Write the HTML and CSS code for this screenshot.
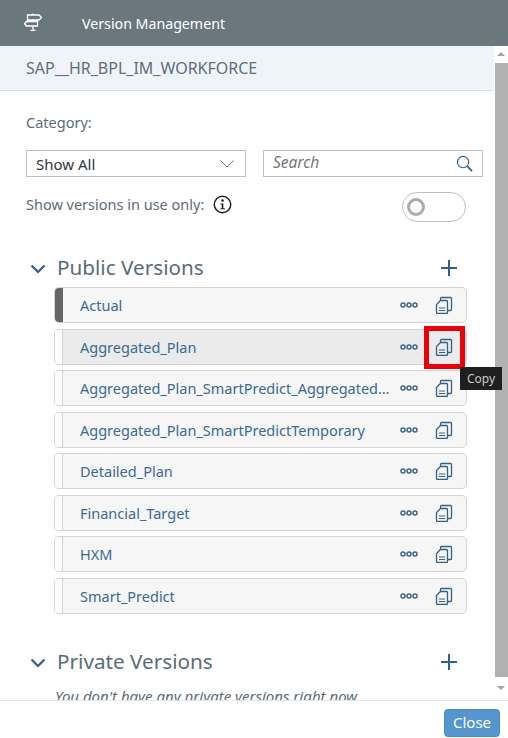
FILE: index.html
```html
<!DOCTYPE html>
<html lang="en">
<head>
<meta charset="UTF-8">
<title>Version Management</title>
<link rel="stylesheet" href="styles.css">
</head>
<body>

<svg width="0" height="0" class="defs">
  <symbol id="i-copy" viewBox="0 0 18 18">
    <path d="M5.500 4.500V2.500A1 1 0 0 1 6.500 1.500H15.500A1 1 0 0 1 16.500 2.500V13.500A1 1 0 0 1 15.500 14.500H12.500" fill="none" stroke="currentColor" stroke-width="1.300"/>
    <path d="M5.500 4.500H11.500A1 1 0 0 1 12.500 5.500V16.500A1 1 0 0 1 11.500 17.500H2.500A1 1 0 0 1 1.500 16.500V8.500Z" fill="none" stroke="currentColor" stroke-width="1.300"/>
    <path d="M4 12H10M4 14.500H10" fill="none" stroke="currentColor" stroke-width="1.200"/>
  </symbol>
  <symbol id="i-more" viewBox="0 0 18 6">
    <circle cx="3" cy="3" r="2" fill="none" stroke="currentColor" stroke-width="1.500"/>
    <circle cx="9" cy="3" r="2" fill="none" stroke="currentColor" stroke-width="1.500"/>
    <circle cx="15" cy="3" r="2" fill="none" stroke="currentColor" stroke-width="1.500"/>
  </symbol>
  <symbol id="i-chev" viewBox="0 0 16 10">
    <path d="M1.500 1.500L8 8L14.500 1.500" fill="none" stroke="currentColor" stroke-width="2.200"/>
  </symbol>
  <symbol id="i-plus" viewBox="0 0 16 16">
    <path d="M8 0V16M0 8H16" fill="none" stroke="currentColor" stroke-width="2"/>
  </symbol>
</svg>

<header class="shell">
  <svg class="shell-icon" width="18" height="18" viewBox="0 0 18 18">
    <path d="M9 0.500V2M3.500 2H15L17.500 4.500L15 7H3.500ZM2.500 8.500H13.500V13H2.500L0.500 10.750ZM9 13V17.500M6.500 17.500H11.500" fill="none" stroke="#fff" stroke-width="1.300"/>
  </svg>
  <span class="shell-title">Version Management</span>
</header>

<div class="middle">
  <div class="pane">
    <div class="model">SAP__HR_BPL_IM_WORKFORCE</div>

    <div class="filters">
      <div class="category">Category:</div>
      <div class="filter-row">
        <div class="field select">
          <span>Show All</span>
          <svg width="14" height="8" viewBox="0 0 14 8"><path d="M0.500 0.500L7 7L13.500 0.500" fill="none" stroke="#5a7a96" stroke-width="1"/></svg>
        </div>
        <div class="field search">
          <span>Search</span>
          <svg width="17" height="17" viewBox="0 0 18 18"><circle cx="7.500" cy="7.500" r="6" fill="none" stroke="#346187" stroke-width="1.200"/><path d="M12 12L17 17" stroke="#346187" stroke-width="1.800"/></svg>
        </div>
      </div>
      <div class="use-row">
        <span>Show versions in use only:</span>
        <svg class="info" width="19" height="19" viewBox="0 0 18 18"><circle cx="9" cy="9" r="7.800" fill="none" stroke="#222" stroke-width="1.400"/><circle cx="9" cy="5.300" r="1.200" fill="#222"/><path d="M7 8H9.800V12.500H11.200V13.500H7V12.500H8.300V9H7Z" fill="#222"/></svg>
        <div class="toggle"><i></i></div>
      </div>
    </div>

    <section class="group public">
      <div class="group-head">
        <svg class="chev" width="16" height="10"><use href="#i-chev"/></svg>
        <h2>Public Versions</h2>
        <svg class="plus" width="16" height="16"><use href="#i-plus"/></svg>
      </div>
      <ul class="versions">
        <li class="version active"><span class="name">Actual</span><svg class="more" width="18" height="6"><use href="#i-more"/></svg><svg class="copy" width="18" height="18"><use href="#i-copy"/></svg></li>
        <li class="version hover"><span class="name">Aggregated_Plan</span><svg class="more" width="18" height="6"><use href="#i-more"/></svg><svg class="copy" width="18" height="18"><use href="#i-copy"/></svg>
          <div class="marker"></div>
        </li>
        <li class="version"><span class="name">Aggregated_Plan_SmartPredict_Aggregated_Plan</span><svg class="more" width="18" height="6"><use href="#i-more"/></svg><svg class="copy" width="18" height="18"><use href="#i-copy"/></svg></li>
        <li class="version"><span class="name">Aggregated_Plan_SmartPredictTemporary</span><svg class="more" width="18" height="6"><use href="#i-more"/></svg><svg class="copy" width="18" height="18"><use href="#i-copy"/></svg></li>
        <li class="version"><span class="name">Detailed_Plan</span><svg class="more" width="18" height="6"><use href="#i-more"/></svg><svg class="copy" width="18" height="18"><use href="#i-copy"/></svg></li>
        <li class="version"><span class="name">Financial_Target</span><svg class="more" width="18" height="6"><use href="#i-more"/></svg><svg class="copy" width="18" height="18"><use href="#i-copy"/></svg></li>
        <li class="version"><span class="name">HXM</span><svg class="more" width="18" height="6"><use href="#i-more"/></svg><svg class="copy" width="18" height="18"><use href="#i-copy"/></svg></li>
        <li class="version"><span class="name">Smart_Predict</span><svg class="more" width="18" height="6"><use href="#i-more"/></svg><svg class="copy" width="18" height="18"><use href="#i-copy"/></svg></li>
      </ul>
    </section>

    <section class="group private">
      <div class="group-head">
        <svg class="chev" width="16" height="10"><use href="#i-chev"/></svg>
        <h2>Private Versions</h2>
        <svg class="plus" width="16" height="16"><use href="#i-plus"/></svg>
      </div>
      <p class="empty">You don't have any private versions right now.</p>
    </section>
  </div>

  <div class="scrollbar">
    <div class="arrow up"></div>
    <div class="thumb"></div>
    <div class="arrow down"></div>
  </div>

  <div class="tooltip">Copy</div>
</div>

<footer class="foot">
  <button class="close">Close</button>
</footer>

</body>
</html>
```

FILE: styles.css
```css
* { box-sizing: border-box; }
html, body { height: 100%; }
body {
  margin: 0; display: flex; flex-direction: column; overflow: hidden;
  font-family: "Noto Sans", "Open Sans", sans-serif; font-size: 14.5px;
  color: #5b6b78; background: #fff;
}
.defs { position: absolute; }

.shell {
  flex: none; height: 46px; background: #6a787e; color: #fff;
  display: flex; align-items: center; padding-left: 24px;
}
.shell-icon { margin-top: -1px; margin-bottom: 1px; }
.shell-title { margin-left: 40px; font-size: 14.2px; }

.middle { flex: none; height: 654px; display: flex; position: relative; }
.pane { width: 494px; overflow: hidden; }

.model {
  height: 45px; padding: 12px 26px 0; background: #eff4f9;
  border-bottom: 1px solid #d5e2f0; font-size: 16px; line-height: 20px; color: #5f6e7a;
}

.filters { padding: 0 11px 0 26px; }
.category { margin-top: 21px; line-height: 20px; }
.filter-row { display: flex; gap: 17px; margin-top: 18px; }
.field {
  width: 220px; height: 27px; border: 1px solid #bfbfbf; background: #fff;
  display: flex; align-items: center; justify-content: space-between;
  padding: 0 9px;
}
.select { color: #32363a; padding-right: 11px; font-size: 15px; }
.search { color: #74777a; font-style: italic; padding-right: 9px; font-size: 15.5px; }
.search span { margin-top: -3px; }

.use-row { display: flex; align-items: center; height: 30px; margin-top: 15px; }
.use-row span { margin-top: -6px; }
.info { margin: -6px 0 0 9px; }
.toggle {
  margin-left: auto; margin-right: 17px; width: 64px; height: 30px;
  border: 1px solid #bfbfbf; border-radius: 15px; padding: 5px 4px;
}
.toggle i {
  display: block; width: 18px; height: 18px; border: 3px solid #ababab;
  border-radius: 50%; background: #fff;
}

.group { padding: 0 27px 0 30px; }
.public { margin-top: 31px; }
.private { margin-top: 33px; }
.group-head { display: flex; align-items: center; height: 30px; }
.group-head h2 {
  margin: -2px 0 0 11px; font-size: 20.7px; font-weight: 400; color: #5b6b78;
}
.chev { color: #2f5f8a; margin-top: 2px; }
.plus { color: #2f5f8a; margin-left: auto; margin-right: 10px; }

.versions { list-style: none; margin: 4px 0 0 24px; padding: 0; }
.version {
  position: relative; height: 36px; margin-bottom: 5.5px; padding: 0 13px 0 25px;
  display: flex; align-items: center;
  background: #f6f6f6; border: 1px solid #d4d4d4; border-radius: 5px;
  color: #3a6a96;
}
.version::before {
  content: ""; position: absolute; left: 0; top: 0; bottom: 0; width: 7px;
  background: #fff; border-right: 1px solid #d4d4d4; border-radius: 4px 0 0 4px;
}
.version.active::before { background: #666; border-right-color: #666; }
.version.hover { background: #ebebeb; }
.name { flex: 1; min-width: 0; overflow: hidden; white-space: nowrap; text-overflow: ellipsis; margin-right: 7px; }
.more { flex: none; color: #3f668c; margin-right: 17px; }
.copy { flex: none; color: #346187; }

.marker {
  position: absolute; right: 1px; top: -4px; width: 41px; height: 43px;
  border: 5px solid #e8000a;
}
.tooltip {
  position: absolute; left: 460px; top: 321px; width: 42px; height: 23px; z-index: 4;
  background: #1f1f1f; color: #c9c9c9; font-size: 12px; line-height: 23px; text-align: center;
}

.empty { margin: 9px 0 0 25px; font-style: italic; font-size: 15px; white-space: nowrap; }

.scrollbar {
  width: 14px; display: flex; flex-direction: column; align-items: center;
}
.arrow { width: 0; height: 0; border-left: 4px solid transparent; border-right: 4px solid transparent; }
.arrow.up { margin-top: 6px; border-bottom: 4px solid #a3a3a3; }
.thumb { width: 13px; height: 614px; margin: 7px 0 0 1px; background: #b1b1b1; }
.arrow.down { margin-top: 9px; border-top: 4px solid #a3a3a3; }

.foot {
  flex: 1; border-top: 1px solid #e5e5e5; background: #fff;
  display: flex; justify-content: flex-end; padding: 8px 8px 0 0;
}
.close {
  width: 56px; height: 28px; padding: 0 0 2px; background: #5496cd; color: #fff;
  border: 1px solid #4a8cc4; border-radius: 4px;
  font-family: inherit; font-size: 15px;
}
```
